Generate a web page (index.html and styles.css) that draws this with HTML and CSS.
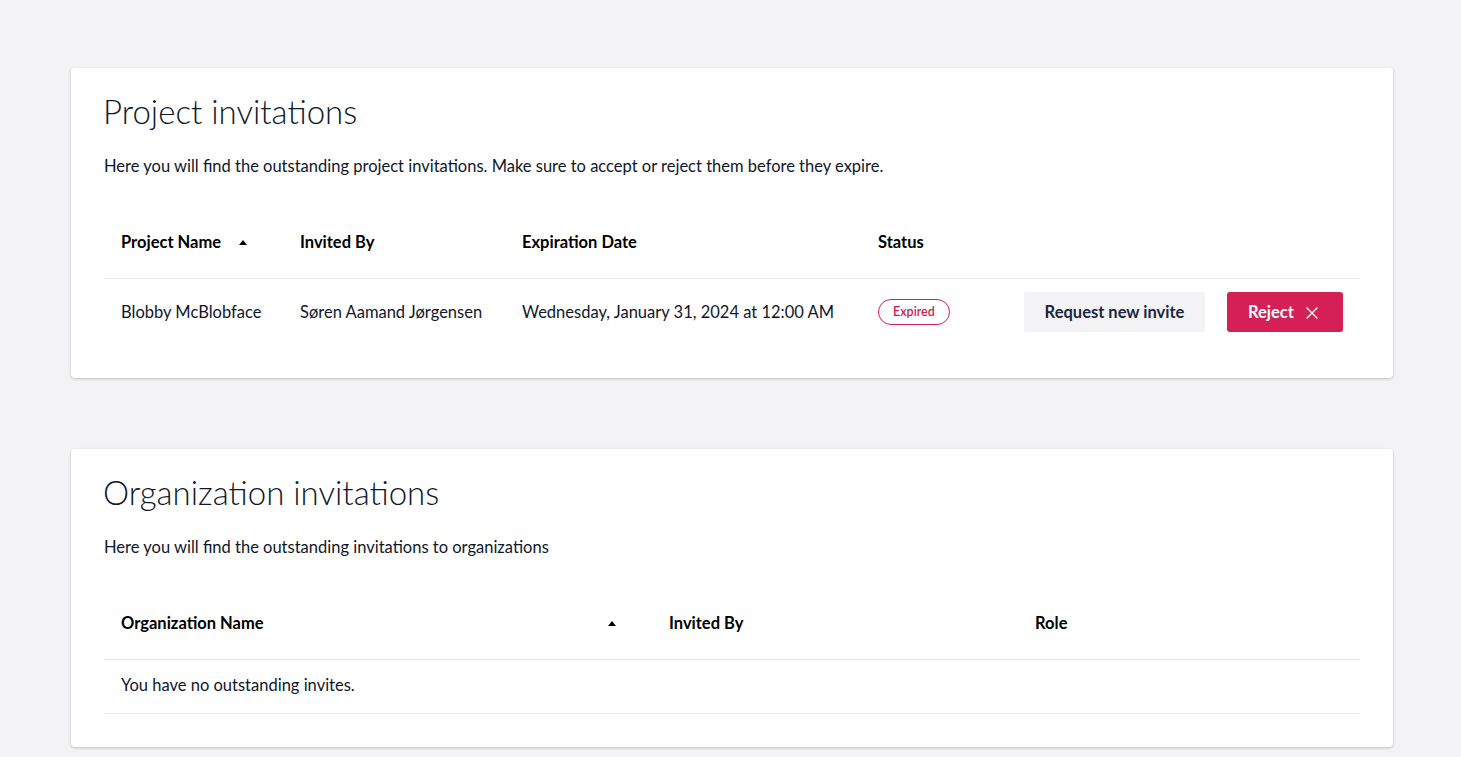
FILE: index.html
```html
<!DOCTYPE html>
<html lang="en">
<head>
<meta charset="utf-8">
<title>Invitations</title>
<link rel="stylesheet" href="styles.css">
</head>
<body>
<main class="page">
  <section class="card">
    <h1 class="card-title">Project invitations</h1>
    <p class="card-desc">Here you will find the outstanding project invitations. Make sure to accept or reject them before they expire.</p>
    <table class="table">
      <colgroup>
        <col class="c-pname"><col class="c-pby"><col class="c-pexp"><col class="c-pstatus"><col class="c-pact">
      </colgroup>
      <thead>
        <tr>
          <th><div class="th-sort"><span>Project Name</span><span class="sort-arrow"></span></div></th>
          <th>Invited By</th>
          <th>Expiration Date</th>
          <th>Status</th>
          <th></th>
        </tr>
      </thead>
      <tbody>
        <tr class="row-data">
          <td>Blobby McBlobface</td>
          <td>Søren Aamand Jørgensen</td>
          <td>Wednesday, January 31, 2024 at 12:00 AM</td>
          <td><span class="badge">Expired</span></td>
          <td>
            <div class="actions">
              <button class="btn btn-secondary" type="button">Request new invite</button>
              <button class="btn btn-danger" type="button">Reject
                <svg class="btn-icon" width="12" height="12" viewBox="0 0 12 12" aria-hidden="true"><path d="M1 1L11 11M11 1L1 11" stroke="#fff" stroke-width="1.4" fill="none" stroke-linecap="round"/></svg>
              </button>
            </div>
          </td>
        </tr>
      </tbody>
    </table>
  </section>

  <section class="card">
    <h1 class="card-title">Organization invitations</h1>
    <p class="card-desc">Here you will find the outstanding invitations to organizations</p>
    <table class="table">
      <colgroup>
        <col class="c-oname"><col class="c-oby"><col class="c-orole">
      </colgroup>
      <thead>
        <tr>
          <th><div class="th-sort"><span>Organization Name</span><span class="sort-arrow"></span></div></th>
          <th>Invited By</th>
          <th>Role</th>
        </tr>
      </thead>
      <tbody>
        <tr class="row-empty">
          <td colspan="3">You have no outstanding invites.</td>
        </tr>
      </tbody>
    </table>
  </section>
</main>
</body>
</html>
```

FILE: styles.css
```css
html, body {
  margin: 0;
  padding: 0;
}
body {
  background: #f3f3f5;
  font-family: Lato, "Open Sans", "Liberation Sans", sans-serif;
  color: #0f172a;
}
.page {
  padding: 68px 68px 40px 71px;
  display: flex;
  flex-direction: column;
  gap: 71px;
}
.card {
  background: #ffffff;
  border-radius: 4px;
  box-shadow: 0 1px 3px rgba(0, 0, 0, 0.22);
  padding: 22px 33px 33px 33px;
}
.card-title {
  margin: 0 0 0 -1px;
  font-size: 33px;
  line-height: 42px;
  font-weight: 300;
  color: #0f172a;
}
.card-desc {
  margin: 22px 0 0 0;
  font-size: 16.5px;
  line-height: 24px;
  color: #0f172a;
}
.table {
  width: 100%;
  border-collapse: collapse;
  table-layout: fixed;
  margin-top: 35px;
}
.c-pname { width: 179px; }
.c-pby { width: 222px; }
.c-pexp { width: 356px; }
.c-pstatus { width: 146px; }
.c-oname { width: 548px; }
.c-oby { width: 366px; }
.table th {
  text-align: left;
  font-size: 16.5px;
  line-height: 24px;
  font-weight: 700;
  color: #000;
  padding: 17px 17px 24px 17px;
  border-bottom: 1px solid #e9e9ec;
}
.th-sort {
  display: flex;
  align-items: center;
  justify-content: space-between;
}
.sort-arrow {
  width: 0;
  height: 0;
  border-left: 4px solid transparent;
  border-right: 4px solid transparent;
  border-bottom: 5px solid #000;
  margin-right: 19px;
}
.table td {
  font-size: 16.5px;
  line-height: 24px;
  color: #0f172a;
  padding: 13px 17px;
  vertical-align: middle;
  white-space: nowrap;
}
.row-data td {
  line-height: 22px;
}
.row-empty td {
  padding: 13px 17px 16px 17px;
  border-bottom: 1px solid #e9e9ec;
}
.badge {
  display: inline-flex;
  align-items: center;
  height: 24px;
  padding: 0 14px;
  border: 1px solid #d42056;
  border-radius: 13px;
  font-size: 12.5px;
  line-height: 24px;
  color: #c81e50;
  font-weight: 600;
}
.actions {
  display: flex;
  gap: 22px;
}
.btn {
  height: 40px;
  border: none;
  border-radius: 3px;
  font-family: Lato, "Open Sans", "Liberation Sans", sans-serif;
  font-size: 16.5px;
  font-weight: 700;
  display: inline-flex;
  align-items: center;
  cursor: pointer;
  padding-bottom: 2px;
}
.btn-secondary {
  background: #f3f3f5;
  color: #1b2640;
  width: 181px;
  justify-content: center;
  padding-left: 0;
  padding-right: 0;
}
.btn-danger {
  background: #d42056;
  color: #ffffff;
  padding-left: 21px;
  padding-right: 24px;
  width: 116px;
  gap: 12px;
}
.btn-icon {
  display: block;
  margin-top: 2px;
}
```
